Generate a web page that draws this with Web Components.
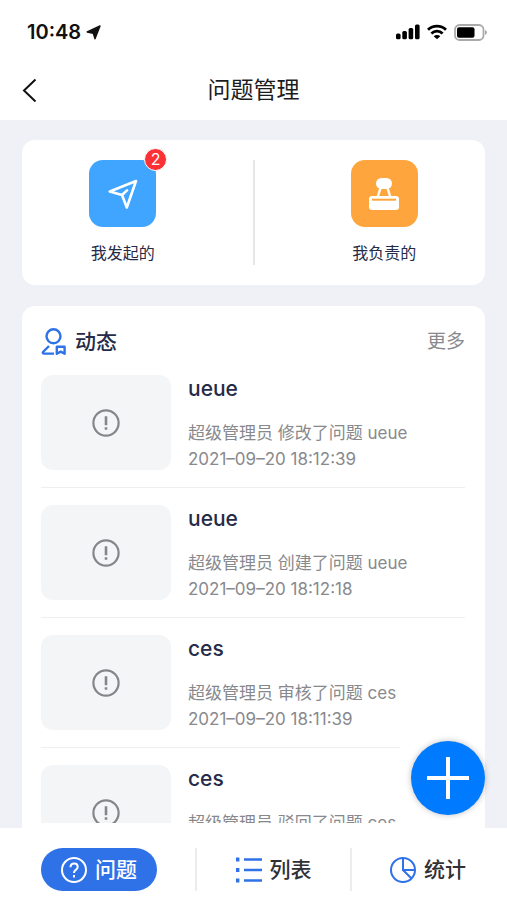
<!DOCTYPE html>
<html lang="zh-CN">
<head>
<meta charset="utf-8">
<meta name="viewport" content="width=device-width, initial-scale=1">
<title>问题管理</title>
<style>
  html, body { height: 100%; margin: 0; }
  body {
    font-family: Inter, "Noto Sans CJK SC", sans-serif;
    background: #fff;
    --ink: #252b48;
    --muted: #88898d;
    --blue: #2f72e8;
    --page: #f0f1f6;
  }
</style>
</head>
<body>
<issue-app></issue-app>

<script>
const define = (name, html) => {
  const template = document.createElement('template');
  template.innerHTML = html;
  customElements.define(name, class extends HTMLElement {
    constructor() {
      super();
      this.attachShadow({ mode: 'open' }).append(template.content.cloneNode(true));
    }
  });
};

define('status-bar', `
<style>
  :host { display: flex; align-items: center; justify-content: space-between; height: 60px; padding: 4px 20px 0 27px; box-sizing: border-box; color: #111; }
  .time, .signals { display: flex; align-items: center; }
  .time { gap: 5px; font-size: 20px; font-weight: 600; line-height: 24px; }
  .signals { gap: 7px; }
  svg { display: block; }
</style>
<div class="time"><span>10:48</span>
  <svg width="15" height="15" viewBox="0 0 15 15" aria-hidden="true"><path d="M14 1 9 13.800 7.300 8.200 1.200 7z" fill="currentColor" stroke="currentColor" stroke-width="1.400" stroke-linejoin="round"/></svg>
</div>
<div class="signals">
  <svg width="24" height="16" viewBox="0 0 24 16" aria-hidden="true" fill="#000"><rect x="0" y="9.5" width="4.6" height="5.8" rx="1.6"/><rect x="6.3" y="7" width="4.6" height="8.300" rx="1.500"/><rect x="12.600" y="4" width="4.600" height="11.300" rx="1.500"/><rect x="19" y=".5" width="4.600" height="14.800" rx="1.500"/></svg>
  <svg width="20" height="16" viewBox="0 0 20 16" aria-hidden="true" fill="none" stroke="#000" stroke-width="2.800"><path d="M1 5.700a13 13 0 0 1 18 0M4.400 9.400a8.200 8.200 0 0 1 11.200 0"/><path d="M10 15.300 6.700 12.300a4.700 4.700 0 0 1 6.600 0z" fill="#000" stroke="none"/></svg>
  <svg width="33" height="17" viewBox="0 0 33 17" aria-hidden="true"><rect x="1" y="1" width="28.500" height="15" rx="4.500" fill="#fff" stroke="#aaa" stroke-width="1.800"/><rect x="3" y="3.200" width="17.500" height="10.600" rx="2" fill="#000"/><path d="M31 6v5q2-.8 2-2.500T31 6" fill="#aaa"/></svg>
</div>`);

define('nav-bar', `
<style>
  :host { display: grid; grid-template-columns: 60px 1fr 60px; align-items: center; height: 60px; }
  h1 { margin: 0; text-align: center; font-size: 23px; line-height: 32px; font-weight: 400; color: #1c1c1e; }
  button { border: 0; padding: 0 0 0 22px; background: none; height: 44px; color: #111; cursor: pointer; text-align: left; }
  svg { display: block; }
</style>
<button type="button" aria-label="返回"><svg width="15" height="24" viewBox="0 0 15 24" fill="none" stroke="currentColor" stroke-width="2"><path d="M13.500 1.500 2 12.500l11.500 11"/></svg></button>
<h1><slot></slot></h1>`);

define('panel-card', `
<style>
  :host { display: block; background: #fff; border-radius: 13px; padding: 20px; }
</style>
<slot></slot>`);

define('quick-entry', `
<style>
  :host { display: block; flex: 1; --tile: #40a5ff; }
  button { display: flex; flex-direction: column; align-items: center; gap: 14px; width: 100%; border: 0; padding: 0; background: none; font: inherit; color: var(--ink); cursor: pointer; }
  .tile { position: relative; display: grid; place-items: center; width: 67px; height: 67px; border-radius: 14px; background: var(--tile); }
  .label { font-size: 16px; line-height: 24px; }
  ::slotted([slot=badge]) { position: absolute; top: -12px; right: -11px; box-sizing: border-box; width: 23px; height: 23px; border: 1px solid #fff; border-radius: 50%; background: #fb3135; color: #fff; font-size: 16px; line-height: 21px; text-align: center; }
  ::slotted(svg) { display: block; }
</style>
<button type="button">
  <span class="tile"><slot name="icon"></slot><slot name="badge"></slot></span>
  <span class="label"><slot></slot></span>
</button>`);

define('quick-row', `
<style>
  :host { display: flex; }
  i { width: 2px; height: 105px; margin: 0 49px; background: #e5e6ea; }
</style>
<slot name="start"></slot><i></i><slot name="end"></slot>`);

define('feed-header', `
<style>
  :host { display: flex; align-items: center; height: 32px; margin-bottom: 17px; }
  svg { display: block; margin-right: 8px; }
  h2 { flex: 1; margin: 0; font-size: 21px; line-height: 30px; font-weight: 500; color: var(--ink); }
  a { font-size: 19px; line-height: 28px; color: var(--muted); text-decoration: none; }
</style>
<svg width="26" height="28" viewBox="0 0 26 28" aria-hidden="true" fill="none" stroke="var(--blue)" stroke-width="2.400" stroke-linejoin="round"><circle cx="12.500" cy="8.300" r="7"/><path d="M8 18 2 24q-.7 1.600 1 1.600H13M15.800 18.800h7.800v7l-3.900-2.200-3.900 2.200z"/></svg>
<h2><slot></slot></h2>
<a href="#more">更多</a>`);

define('feed-item', `
<style>
  :host { display: flex; gap: 17px; padding-bottom: 15px; margin-bottom: 17px; border-bottom: 1px solid #eeeff1; }
  .thumb { display: grid; place-items: center; flex: none; width: 130px; height: 95px; border-radius: 12px; background: #f3f5f7; }
  .copy { flex: 1; min-width: 0; padding-top: 1px; color: var(--muted); font-size: 17px; line-height: 26px; }
  h3 { margin: 0 0 18px; font-size: 21px; line-height: 26px; font-weight: 500; color: var(--ink); }
  p { margin: 0; white-space: nowrap; }
</style>
<div class="thumb"><svg width="28" height="28" viewBox="0 0 28 28" aria-hidden="true" fill="none" stroke="#85868a" stroke-width="2.200"><circle cx="14" cy="14" r="12.600"/><path d="M14 7.200v9M14 18.200v2.600" stroke-width="2.600"/></svg></div>
<div class="copy">
  <h3><slot name="title"></slot></h3>
  <p><slot></slot></p>
  <p><slot name="time"></slot></p>
</div>`);

define('add-button', `
<style>
  :host { position: absolute; right: 22px; bottom: 13px; padding-left: 11px; background: #fff; border-radius: 0 37px 37px 0; }
  button { display: grid; place-items: center; width: 74px; height: 74px; border: 0; padding: 0; border-radius: 50%; background: #007aff; box-shadow: 0 0 6px rgba(0,0,0,.25); cursor: pointer; }
</style>
<button type="button" aria-label="新增"><svg width="42" height="42" viewBox="0 0 42 42" stroke="#fff" stroke-width="4"><path d="M21 0v42M0 21h42"/></svg></button>`);

define('tab-item', `
<style>
  :host { display: block; }
  button { display: flex; align-items: center; gap: 8px; height: 43px; border: 0; padding: 0; border-radius: 22px; background: none; color: #303135; font: inherit; font-size: 21px; line-height: 30px; font-weight: 500; cursor: pointer; }
  :host([active]) button { padding: 0 20px; background: var(--blue); color: #fff; }
  ::slotted(svg) { display: block; }
</style>
<button type="button"><slot name="icon"></slot><span><slot></slot></span></button>`);

define('tab-bar', `
<style>
  :host { display: flex; justify-content: space-between; align-items: center; height: 72px; padding: 11px 41px 0; box-sizing: border-box; background: #fff; }
  i { width: 2px; height: 43px; background: #ebecef; }
</style>
<slot name="first"></slot><i></i><slot name="second"></slot><i></i><slot name="third"></slot>`);

define('issue-app', `
<style>
  :host { display: flex; flex-direction: column; height: 100vh; min-height: 400px; overflow: hidden; }
  .stage { position: relative; flex: 1; min-height: 0; display: flex; }
  main { flex: 1; display: flex; flex-direction: column; gap: 21px; min-width: 0; padding: 20px 22px 0; background: var(--page); }
  .feed { display: flex; flex-direction: column; flex: 1; min-height: 0; border-radius: 13px 13px 0 0; padding: 20px 20px 5px 19px; }
  .list { flex: 1; min-height: 0; overflow: hidden; }
  tab-bar { flex: none; }
</style>
<status-bar></status-bar>
<nav-bar>问题管理</nav-bar>
<div class="stage">
  <main>
    <panel-card>
      <quick-row>
        <quick-entry slot="start">
          <svg slot="icon" width="30" height="30" viewBox="0 0 30 30" aria-hidden="true" fill="none" stroke="#fff" stroke-width="2.600" stroke-linejoin="round" stroke-linecap="round"><path d="M28 2 1.800 12.500 14 16 18.800 28.500zM14 16l5-4.600"/></svg>
          <span slot="badge">2</span>我发起的
        </quick-entry>
        <quick-entry slot="end" style="--tile:#ffa53d">
          <svg slot="icon" width="30" height="32" viewBox="0 0 30 32" aria-hidden="true"><rect x="7" y="0" width="16" height="11" rx="5.500" fill="#fff"/><path d="m11.500 10-2.800 9M18.500 10l2.800 9" stroke="#fff" stroke-width="2.400"/><rect y="18" width="30" height="14" rx="3" fill="#fff"/><path d="M3 21.700h24" stroke="#ffa53d" stroke-width="2"/></svg>
          我负责的
        </quick-entry>
      </quick-row>
    </panel-card>
    <panel-card class="feed">
      <feed-header>动态</feed-header>
      <div class="list">
        <feed-item><span slot="title">ueue</span>超级管理员 修改了问题 ueue<time slot="time">2021–09–20 18:12:39</time></feed-item>
        <feed-item><span slot="title">ueue</span>超级管理员 创建了问题 ueue<time slot="time">2021–09–20 18:12:18</time></feed-item>
        <feed-item><span slot="title">ces</span>超级管理员 审核了问题 ces<time slot="time">2021–09–20 18:11:39</time></feed-item>
        <feed-item><span slot="title">ces</span>超级管理员 驳回了问题 ces</feed-item>
      </div>
    </panel-card>
  </main>
  <add-button></add-button>
</div>
<tab-bar>
  <tab-item slot="first" active><svg slot="icon" width="26" height="26" viewBox="0 0 26 26" aria-hidden="true" fill="none" stroke="#fff" stroke-width="2"><circle cx="13" cy="13" r="12"/><path d="M9.500 10.300q0-3.800 3.600-3.800t3.600 3.300q0 1.700-1.900 3Q13 14 13 16M13 18v2.500"/></svg>问题</tab-item>
  <tab-item slot="second"><svg slot="icon" width="26" height="26" viewBox="0 0 26 26" aria-hidden="true" stroke="var(--blue)" stroke-width="2.400"><path d="M8 2.500h18M8 13h18M8 23.500h18"/><path d="M0 2.500h3.400M0 13h3.400M0 23.500h3.400" stroke-width="3.800"/></svg>列表</tab-item>
  <tab-item slot="third"><svg slot="icon" width="26" height="26" viewBox="0 0 26 26" aria-hidden="true" fill="none" stroke="var(--blue)" stroke-width="2"><circle cx="13" cy="13" r="12"/><path d="M13 1v12h12M13 13l8.500 8.500"/></svg>统计</tab-item>
</tab-bar>`);
</script>
</body>
</html>
